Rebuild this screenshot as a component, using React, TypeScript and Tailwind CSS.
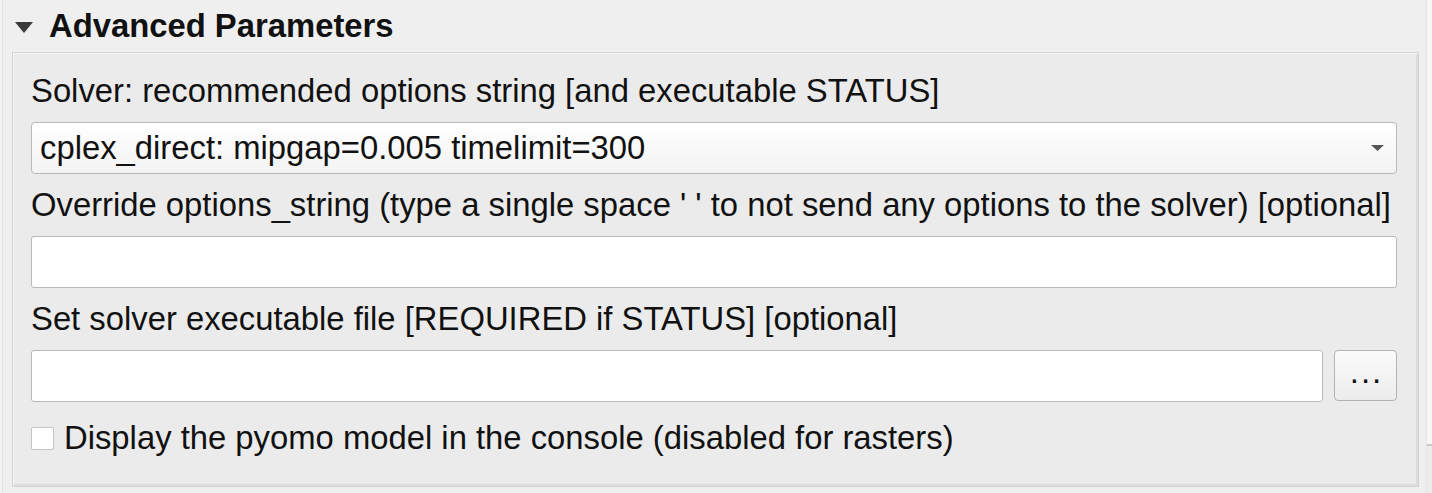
import React from "react";

export default function App() {
  const font = { fontFamily: '"Liberation Sans", Arial, sans-serif' };
  return (
    <div className="w-[1432px] h-[493px] bg-[#efefef] overflow-hidden relative" style={font}>
      <div className="absolute left-0 top-0 h-full w-[3px] bg-[#f4f4f4] border-r border-[#e2e2e2]" />
      <div className="absolute right-0 top-0 h-full w-[6px] bg-[#f7f7f7] border-l border-[#e6e6e6]">
        <div className="mt-[444px] h-[49px] border-t-2 border-[#c8c8c8] bg-[#ececec]" />
      </div>
      <div className="pl-[12px] pr-[13px]">
        <div className="flex items-center h-[52px]">
          <svg width="18" height="11" viewBox="0 0 18 11" className="ml-[3px] mr-[16px] mt-[2px]">
            <polygon points="0,0 18,0 9,11" fill="#3a3a3a" />
          </svg>
          <span className="text-[32.8px] font-bold text-[#111] leading-none">Advanced Parameters</span>
        </div>
        <div className="h-[435px] border border-[#d3d3d3] bg-[#ebebeb] shadow-[inset_1px_1px_0_#f7f7f7,inset_-2px_-2px_0_#dcdcdc] pl-[18px] pr-[21px] pt-[21px]">
          <div className="h-[34px] leading-[34px] text-[32.8px] text-[#111] whitespace-nowrap">Solver: recommended options string [and executable STATUS]</div>
          <div className="mt-[14px] h-[52px] rounded-[4px] border border-[#b9b9b9] bg-gradient-to-b from-[#ffffff] to-[#f3f3f3] flex items-center pl-[8px] pr-[12px]">
            <span className="flex-1 text-[32.8px] text-[#111] leading-none whitespace-nowrap">cplex_direct: mipgap=0.005 timelimit=300</span>
            <svg width="13" height="7" viewBox="0 0 13 7">
              <polygon points="0,0 13,0 6.5,6" fill="#555" />
            </svg>
          </div>
          <div className="mt-[14px] h-[34px] leading-[34px] text-[32.8px] text-[#111] whitespace-nowrap">Override options_string (type a single space ' ' to not send any options to the solver) [optional]</div>
          <div className="mt-[14px] h-[52px] rounded-[3px] border border-[#b9b9b9] bg-white" />
          <div className="mt-[14px] h-[34px] leading-[34px] text-[32.8px] text-[#111] whitespace-nowrap">Set solver executable file [REQUIRED if STATUS] [optional]</div>
          <div className="mt-[14px] flex gap-[11px]">
            <div className="flex-1 h-[52px] rounded-[3px] border border-[#b9b9b9] bg-white" />
            <div className="w-[63px] h-[51px] rounded-[4px] border border-[#b3b3b3] bg-gradient-to-b from-[#fbfbfb] to-[#ececec] flex items-center justify-center text-[33px] tracking-[2px] pl-[2px] text-[#111] leading-none pb-[8px]">...</div>
          </div>
          <div className="mt-[24px] flex items-center h-[24px]">
            <div className="w-[23px] h-[23px] border border-[#c4c4c4] bg-white rounded-[2px]" />
            <span className="ml-[10px] text-[32.8px] text-[#111] leading-none whitespace-nowrap">Display the pyomo model in the console (disabled for rasters)</span>
          </div>
        </div>
      </div>
    </div>
  );
}
